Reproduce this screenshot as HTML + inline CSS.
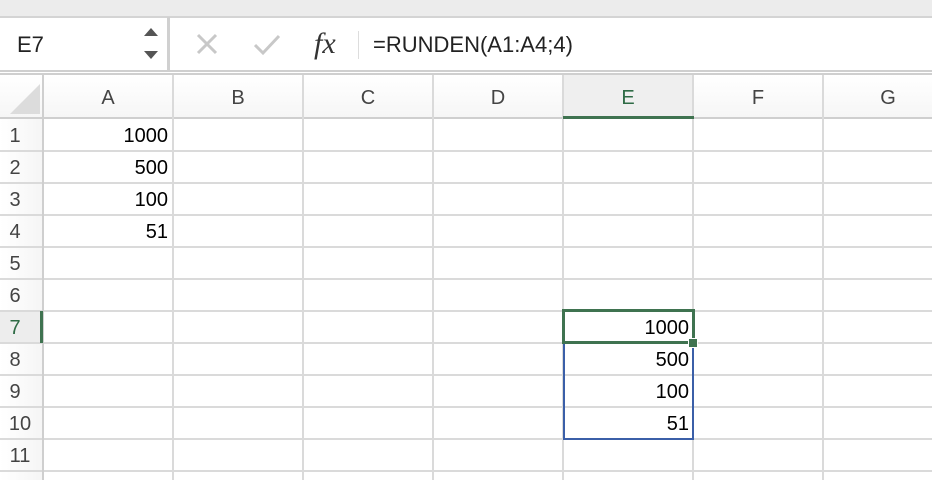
<!DOCTYPE html><html><head><style>
body{margin:0;width:932px;height:480px;overflow:hidden;background:#fff;font-family:"Liberation Sans",sans-serif;position:relative}
div{position:absolute;box-sizing:border-box}
.v{width:2px;background:#dadada;top:75px;height:405px}
.h{height:2px;background:#dadada;left:0;width:932px}
.ch{top:75px;height:43px;line-height:46px;text-align:center;font-size:20px;color:#444;width:130px}
.rh{left:0;width:30px;height:32px;line-height:34px;text-align:center;font-size:20px;color:#444}
.n{font-size:20px;color:#000;text-align:right;width:125px;height:32px;line-height:34px}
</style></head><body>
<div style="left:0;top:0;width:932px;height:17px;background:#ececec"></div>
<div style="left:0;top:17px;width:932px;height:54px;background:#fff"></div>
<div style="left:0;top:16px;width:932px;height:2px;background:#d4d4d4"></div>
<div style="left:167px;top:17px;width:3px;height:53px;background:#d0d0d0"></div>
<div style="left:17px;top:32px;font-size:22px;color:#222">E7</div>
<svg style="position:absolute;left:141px;top:27px" width="20" height="36"><path d="M3 9L10 1L17 9Z" fill="#555"/><path d="M3 24L10 32L17 24Z" fill="#555"/></svg>
<svg style="position:absolute;left:196px;top:33px" width="24" height="24"><path d="M2 2L20 20M20 2L2 20" stroke="#c8c8c8" stroke-width="3"/></svg>
<svg style="position:absolute;left:253px;top:33px" width="30" height="24"><path d="M2 12L10 20L26 3" stroke="#c8c8c8" stroke-width="3" fill="none"/></svg>
<div style="left:314px;top:27px;font-family:'Liberation Serif',serif;font-style:italic;font-size:30px;color:#333">fx</div>
<div style="left:358px;top:31px;width:1px;height:28px;background:#ddd"></div>
<div style="left:373px;top:32px;font-size:22px;color:#222">=RUNDEN(A1:A4;4)</div>
<div style="left:0;top:70px;width:932px;height:5px;border-top:2px solid #cfcfcf;border-bottom:2px solid #cfcfcf"></div>
<div style="left:0;top:75px;width:932px;height:43px;background:linear-gradient(#fff,#f6f6f6)"></div>
<div style="left:563px;top:75px;width:130px;height:43px;background:#efefef"></div>
<div style="left:0;top:118px;width:43px;height:362px;background:linear-gradient(90deg,#fff,#f5f5f5)"></div>
<div style="left:0;top:311px;width:43px;height:32px;background:#ededed"></div>
<svg style="position:absolute;left:8px;top:84px" width="32" height="32"><path d="M32 0V30H2Z" fill="#dcdcdc"/></svg>
<div class="h" style="top:117px;background:#cfcfcf"></div>
<div class="h" style="top:150px"></div><div class="h" style="top:182px"></div><div class="h" style="top:214px"></div><div class="h" style="top:246px"></div><div class="h" style="top:278px"></div><div class="h" style="top:310px"></div><div class="h" style="top:342px"></div><div class="h" style="top:374px"></div><div class="h" style="top:406px"></div><div class="h" style="top:438px"></div><div class="h" style="top:470px"></div>
<div class="v" style="left:42px;background:#cfcfcf"></div><div class="v" style="left:172px"></div><div class="v" style="left:302px"></div><div class="v" style="left:432px"></div><div class="v" style="left:562px"></div><div class="v" style="left:692px"></div><div class="v" style="left:822px"></div>
<div class="ch" style="left:43px">A</div><div class="ch" style="left:173px">B</div><div class="ch" style="left:303px">C</div><div class="ch" style="left:433px">D</div><div class="ch" style="left:563px;color:#2e6b45">E</div><div class="ch" style="left:693px">F</div><div class="ch" style="left:823px">G</div>
<div style="left:563px;top:116px;width:131px;height:3px;background:#3f7350"></div>
<div class="rh" style="top:119px">1</div><div class="rh" style="top:151px">2</div><div class="rh" style="top:183px">3</div><div class="rh" style="top:215px">4</div><div class="rh" style="top:247px">5</div><div class="rh" style="top:279px">6</div><div class="rh" style="top:311px;color:#2e6b45">7</div><div class="rh" style="top:343px">8</div><div class="rh" style="top:375px">9</div><div class="rh" style="top:407px;width:40px">10</div><div class="rh" style="top:439px;width:40px">11</div>
<div style="left:40px;top:311px;width:3px;height:32px;background:#3f7350"></div>
<div class="n" style="left:43px;top:119px">1000</div><div class="n" style="left:43px;top:151px">500</div><div class="n" style="left:43px;top:183px">100</div><div class="n" style="left:43px;top:215px">51</div>
<div style="left:563px;top:341px;width:131px;height:99px;border:2px solid #3b5fa8;border-top:none"></div>
<div style="left:562px;top:309px;width:133px;height:35px;border:3px solid #3f7350"></div>
<div style="left:688px;top:338px;width:10px;height:10px;background:#3f7350;border:1px solid #fff"></div>
<div class="n" style="left:564px;top:311px">1000</div><div class="n" style="left:564px;top:343px">500</div><div class="n" style="left:564px;top:375px">100</div><div class="n" style="left:564px;top:407px">51</div>
</body></html>
